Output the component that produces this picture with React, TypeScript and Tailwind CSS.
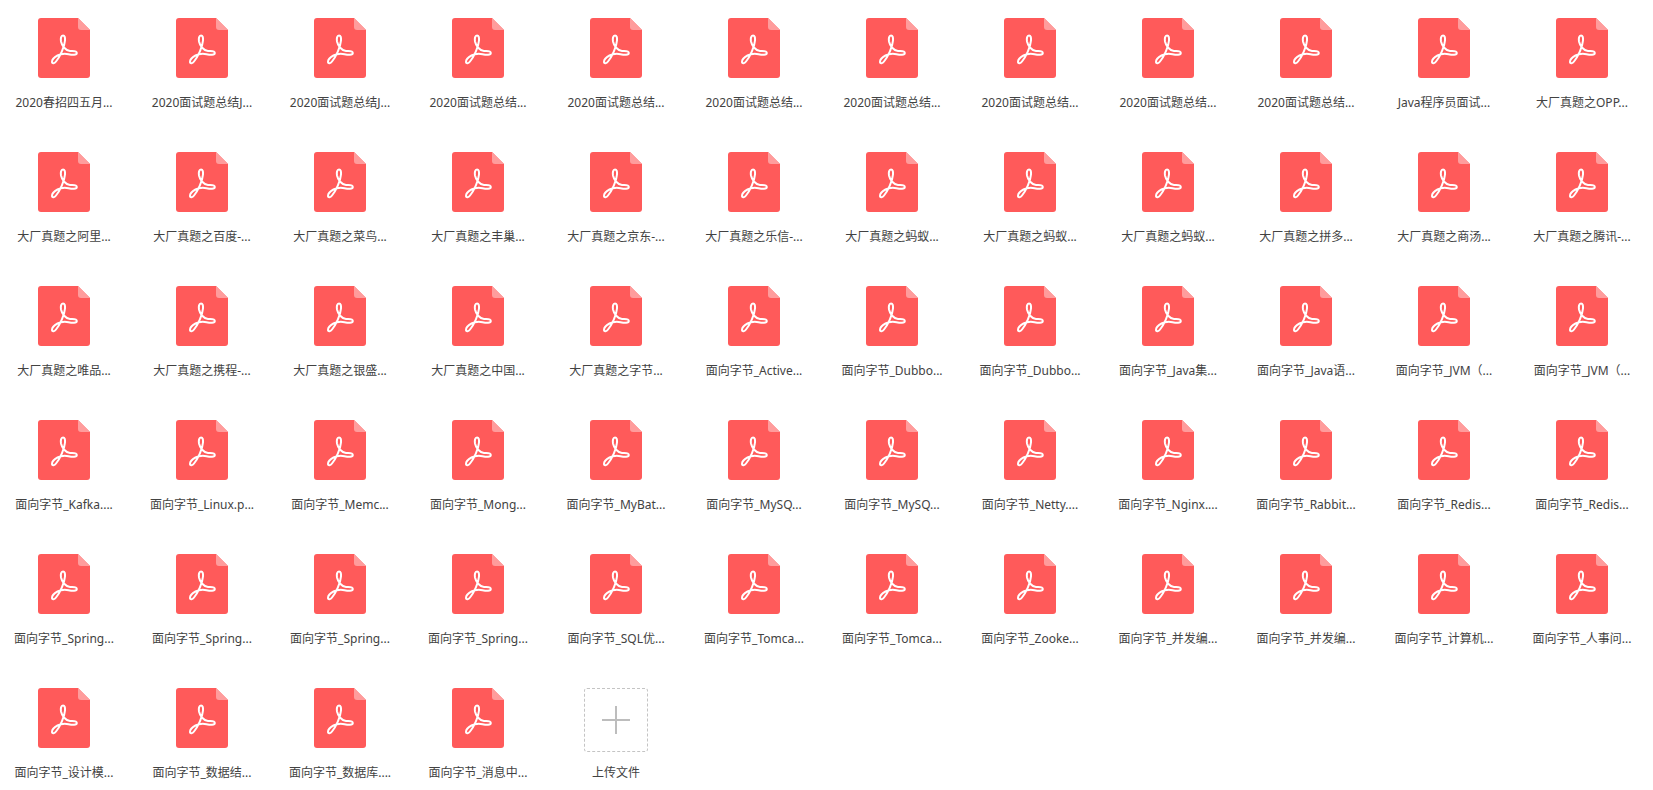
const files = [
  "2020春招四五月...", "2020面试题总结J...", "2020面试题总结J...", "2020面试题总结...", "2020面试题总结...", "2020面试题总结...",
  "2020面试题总结...", "2020面试题总结...", "2020面试题总结...", "2020面试题总结...", "Java程序员面试...", "大厂真题之OPP...",
  "大厂真题之阿里...", "大厂真题之百度-...", "大厂真题之菜鸟...", "大厂真题之丰巢...", "大厂真题之京东-...", "大厂真题之乐信-...",
  "大厂真题之蚂蚁...", "大厂真题之蚂蚁...", "大厂真题之蚂蚁...", "大厂真题之拼多...", "大厂真题之商汤...", "大厂真题之腾讯-...",
  "大厂真题之唯品...", "大厂真题之携程-...", "大厂真题之银盛...", "大厂真题之中国...", "大厂真题之字节...", "面向字节_Active...",
  "面向字节_Dubbo...", "面向字节_Dubbo...", "面向字节_Java集...", "面向字节_Java语...", "面向字节_JVM（...", "面向字节_JVM（...",
  "面向字节_Kafka....", "面向字节_Linux.p...", "面向字节_Memc...", "面向字节_Mong...", "面向字节_MyBat...", "面向字节_MySQ...",
  "面向字节_MySQ...", "面向字节_Netty....", "面向字节_Nginx....", "面向字节_Rabbit...", "面向字节_Redis...", "面向字节_Redis...",
  "面向字节_Spring...", "面向字节_Spring...", "面向字节_Spring...", "面向字节_Spring...", "面向字节_SQL优...", "面向字节_Tomca...",
  "面向字节_Tomca...", "面向字节_Zooke...", "面向字节_并发编...", "面向字节_并发编...", "面向字节_计算机...", "面向字节_人事问...",
  "面向字节_设计模...", "面向字节_数据结...", "面向字节_数据库....", "面向字节_消息中...",
];

function PdfIcon() {
  return (
    <svg width="52" height="60" viewBox="0 0 52 60">
      <path d="M3 0H40L52 12V57a3 3 0 0 1-3 3H3a3 3 0 0 1-3-3V3a3 3 0 0 1 3-3Z" fill="#ff5a5a" />
      <path d="M40 0L52 12H43a3 3 0 0 1-3-3Z" fill="#ff9c9c" />
      <path
        d="M25 17.5C23 17.5 22.5 20.5 23 23.5C24 28 27.5 32.5 32 33C35 33.3 38.8 32.8 38.8 35C38.8 37.5 34 37 30.5 36.2C27 35.5 23 35.8 19.5 37.5C17 38.8 14 41.5 14 44C14 46 16.5 45.5 18 43.5C22 38.5 26.5 29 27 22.5C27.2 19.5 26.8 17.5 25 17.5Z"
        fill="none"
        stroke="#fff"
        strokeWidth="2"
        strokeLinejoin="round"
      />
    </svg>
  );
}

export default function App() {
  return (
    <div className="h-[790px] overflow-hidden bg-white font-['Noto_Sans','Noto_Sans_CJK_SC',sans-serif] text-xs text-[#424242]">
      <div className="grid grid-cols-[repeat(12,128px)] gap-x-[10px]">
        {files.map((name, i) => (
          <div key={i} className="flex h-[134px] flex-col items-center pt-[18px]">
            <PdfIcon />
            <div className="mt-4 leading-[18px] whitespace-nowrap">{name}</div>
          </div>
        ))}
        <div className="flex h-[134px] flex-col items-center pt-[18px]">
          <div className="flex size-16 items-center justify-center rounded-[3px] border border-dashed border-[#c4c4c4]">
            <svg width="28" height="28" viewBox="0 0 28 28">
              <path d="M14 0V28M0 14H28" stroke="#bdbdbd" strokeWidth="2" />
            </svg>
          </div>
          <div className="mt-3 leading-[18px] whitespace-nowrap">上传文件</div>
        </div>
      </div>
    </div>
  );
}
